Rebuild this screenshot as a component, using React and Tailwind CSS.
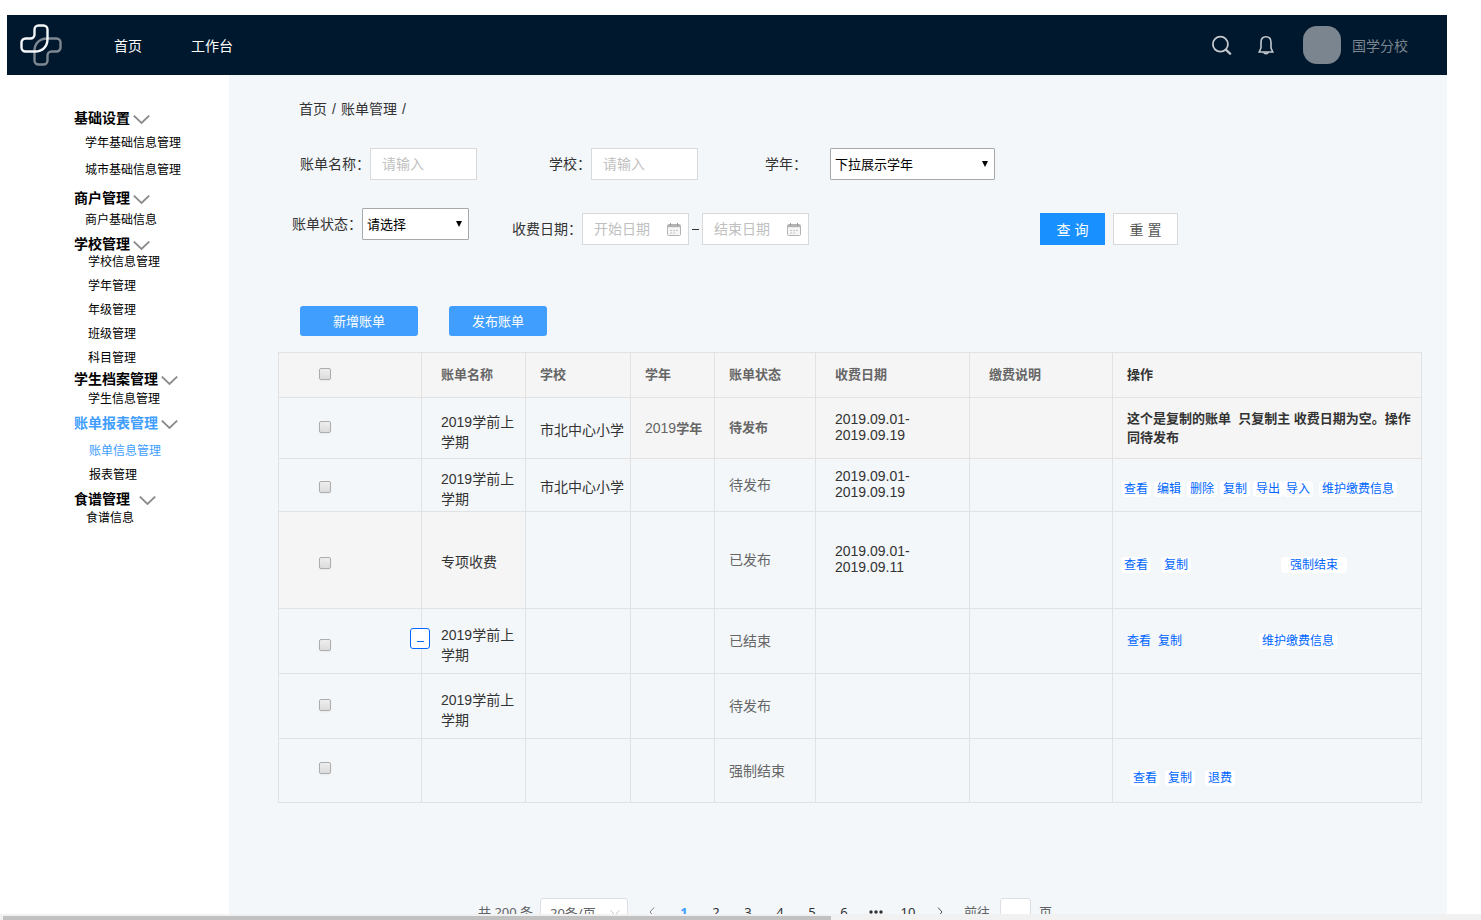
import React, { useState } from "react";
import clsx from "clsx";

const menu = [
  {
    title: "基础设置",
    className: "mt-0",
    listClass: "mt-[7px] pl-[11px] gap-[9px]",
    items: ["学年基础信息管理", "城市基础信息管理"],
  },
  {
    title: "商户管理",
    className: "mt-[10px]",
    listClass: "mt-[4px] pl-[11px]",
    items: ["商户基础信息"],
  },
  {
    title: "学校管理",
    className: "mt-[6px]",
    listClass: "pl-[14px] gap-[6px]",
    items: ["学校信息管理", "学年管理", "年级管理", "班级管理", "科目管理"],
  },
  {
    title: "学生档案管理",
    className: "mt-[3px]",
    listClass: "mt-[2px] pl-[14px]",
    items: ["学生信息管理"],
  },
  {
    title: "账单报表管理",
    className: "mt-[6px]",
    listClass: "mt-[10px] pl-[15px] gap-[6px]",
    items: ["账单信息管理", "报表管理"],
    active: "账单信息管理",
  },
  {
    title: "食谱管理",
    className: "mt-[6px]",
    listClass: "mt-[1px] pl-[12px]",
    items: ["食谱信息"],
  },
];

const columns = [
  { label: "账单名称", pad: "pl-[19px]" },
  { label: "学校", pad: "pl-[14px]" },
  { label: "学年", pad: "pl-[14px]" },
  { label: "账单状态", pad: "pl-[14px]" },
  { label: "收费日期", pad: "pl-[19px]" },
  { label: "缴费说明", pad: "pl-[19px]" },
];

const bills = [
  {
    height: "h-[61px]",
    boxPad: "pb-[2px]",
    name: "2019学前上学期",
    namePad: "pt-2",
    school: "市北中心小学",
    year: "2019学年",
    status: "待发布",
    date: ["2019.09.01-", "2019.09.19"],
    note: "这个是复制的账单\u00a0 只复制主 收费日期为空。操作同待发布",
    highlight: true,
  },
  {
    height: "h-[53px]",
    boxPad: "pt-1",
    name: "2019学前上学期",
    namePad: "pt-2",
    school: "市北中心小学",
    status: "待发布",
    date: ["2019.09.01-", "2019.09.19"],
    linkPad: "pl-2 pt-2",
    links: [
      { text: "查看" },
      { text: "编辑", className: "ml-[3px]" },
      { text: "删除", className: "ml-[3px]" },
      { text: "复制", className: "ml-[3px]" },
      { text: "导出", className: "ml-[3px]" },
      { text: "导入" },
      { text: "维护缴费信息", className: "ml-[6px]" },
    ],
  },
  {
    height: "h-[97px]",
    boxPad: "pt-[6px]",
    name: "专项收费",
    namePad: "pt-1",
    status: "已发布",
    date: ["2019.09.01-", "2019.09.11"],
    grayName: true,
    linkPad: "pl-2 pt-[10px]",
    links: [
      { text: "查看" },
      { text: "复制", className: "ml-[10px]" },
      { text: "强制结束", className: "ml-[90px] px-[9px]" },
    ],
  },
  {
    height: "h-[65px]",
    boxPad: "pt-2",
    name: "2019学前上学期",
    namePad: "pt-2",
    status: "已结束",
    expandable: true,
    linkPad: "pl-[11px]",
    links: [
      { text: "查看", plain: true },
      { text: "复制", plain: true, className: "ml-[1px]" },
      { text: "维护缴费信息", className: "ml-[74px]" },
    ],
  },
  {
    height: "h-[65px]",
    boxPad: "pb-[2px]",
    name: "2019学前上学期",
    namePad: "pt-2",
    status: "待发布",
    links: [],
  },
  {
    height: "h-[64px]",
    boxPad: "pb-[6px]",
    status: "强制结束",
    linkPad: "pl-[17px] pt-[14px]",
    links: [
      { text: "查看" },
      { text: "复制", className: "ml-[5px]" },
      { text: "退费", className: "ml-[10px]" },
    ],
  },
];

const cell = "border border-[#e2e2e2] p-0 text-left";

function Chevron() {
  return (
    <svg
      className="mt-[2px] h-[9px] w-[17px]"
      viewBox="0 0 17 9"
      fill="none"
      stroke="#8a8a8a"
      strokeWidth="1.8"
    >
      <path d="M0.8 0.6L8.5 8L16.2 0.6" />
    </svg>
  );
}

function Logo() {
  const d =
    "M18.5 1.5H23.5a4 4 0 0 1 4 4V15C27.5 22.5 22.5 27.5 15 27.5H5.5a4 4 0 0 1-4-4V18.5a4 4 0 0 1 4-4H10.5a4 4 0 0 0 4-4V5.5a4 4 0 0 1 4-4Z";
  return (
    <svg className="h-[42px] w-[42px]" viewBox="0 0 42 42" fill="none" strokeWidth="2.4">
      <path d={d} stroke="#7d8791" transform="rotate(180 21 21)" />
      <path d={d} stroke="#f4f6f8" />
    </svg>
  );
}

function CalendarIcon() {
  return (
    <svg
      className="pointer-events-none absolute top-[10px] right-[8px] h-[13px] w-[14px]"
      viewBox="0 0 14 13"
      fill="none"
      stroke="#b3b3b3"
    >
      <rect x="0.5" y="1.5" width="13" height="11" rx="1" fill="#f6f6f6" />
      <path d="M1 3h12" strokeWidth="2.4" />
      <path d="M3.5 0v3M10.5 0v3" stroke="#9b9b9b" />
      <path d="M3 7.5h8M3 10h6" strokeDasharray="2 1" stroke="#c4c4c4" />
    </svg>
  );
}

function TextField({ id, label }) {
  return (
    <div className="flex items-center">
      <label htmlFor={id} className="text-sm leading-8 text-[#333]">
        {label}：
      </label>
      <input
        id={id}
        type="text"
        placeholder="请输入"
        className="h-8 w-[107px] border border-[#d9d9d9] bg-white px-[11px] text-sm placeholder:text-[#bfbfbf]"
      />
    </div>
  );
}

function SelectField({ id, label, option, className, gap }) {
  return (
    <div className={clsx("flex items-center", gap)}>
      <label htmlFor={id} className="text-sm leading-8 text-[#333]">
        {label}：
      </label>
      <div className="relative">
        <select
          id={id}
          className={clsx(
            "block h-8 appearance-none rounded-[1px] border border-[#a9a9a9] bg-white pt-[2px] pl-[4px] text-[13px] text-black",
            className
          )}
        >
          <option>{option}</option>
        </select>
        <svg
          className="pointer-events-none absolute top-[13px] right-[7px] h-[6px] w-[6px]"
          viewBox="0 0 6 6"
        >
          <path d="M0 0H6L3 6Z" fill="#000" />
        </svg>
      </div>
    </div>
  );
}

function DateField({ label }) {
  return (
    <div className="relative">
      <input
        type="text"
        aria-label={label}
        placeholder={label}
        className="block h-8 w-[107px] border border-[#d9d9d9] bg-white pl-[11px] text-sm placeholder:text-[#bfbfbf]"
      />
      <CalendarIcon />
    </div>
  );
}

function Checkbox({ label }) {
  return (
    <input
      type="checkbox"
      aria-label={label}
      className="ml-10 block h-3 w-3 appearance-none rounded-[2px] border border-[#adadad] bg-linear-to-b from-[#eeeeee] to-[#dcdcdc] shadow-xs checked:bg-[#409eff]"
    />
  );
}

function BillRow({ bill, index }) {
  const gray = bill.highlight && "bg-[#f5f5f5]";
  const grayName = bill.grayName && "bg-[#f5f5f5]";
  const statusText = bill.highlight
    ? "text-[13px] font-bold text-[#666]"
    : "text-sm text-[#666]";

  return (
    <tr className={bill.height}>
      <td className={clsx(cell, grayName, bill.boxPad)}>
        <Checkbox label={`选择第${index + 1}行`} />
      </td>
      <td
        className={clsx(
          cell,
          grayName,
          "relative pr-2 pl-[19px] text-sm leading-5 text-[#333]",
          bill.namePad
        )}
      >
        {bill.expandable && (
          <button
            type="button"
            aria-label="收起"
            className="absolute top-[19px] -left-3 flex h-[21px] w-5 items-center justify-center rounded-[3px] border border-[#0066ff] bg-white"
          >
            <span className="mt-[5px] h-px w-[7px] bg-[#0066ff]" />
          </button>
        )}
        {bill.name}
      </td>
      <td className={clsx(cell, "pt-1 pl-[14px] text-sm whitespace-nowrap text-[#333]")}>
        {bill.school}
      </td>
      <td className={clsx(cell, gray, "pl-[14px]", statusText)}>
        {bill.year && (
          <>
            <span className="text-sm font-normal">{bill.year.slice(0, 4)}</span>
            {bill.year.slice(4)}
          </>
        )}
      </td>
      <td className={clsx(cell, gray, "pl-[14px]", statusText)}>{bill.status}</td>
      <td className={clsx(cell, gray, "pb-[2px] pl-[19px] text-sm leading-4 text-[#333]")}>
        {bill.date?.map((line) => (
          <div key={line}>{line}</div>
        ))}
      </td>
      <td className={clsx(cell, gray)}></td>
      {bill.note ? (
        <td className={clsx(cell, gray, "pr-2 pl-[14px] text-[13px] leading-[19px] text-[#333]")}>
          <strong>{bill.note}</strong>
        </td>
      ) : (
        <td className={clsx(cell, bill.linkPad)}>
          <div className="flex items-center">
            {bill.links.map((link) => (
              <a
                key={link.text}
                href="#"
                className={clsx(
                  "rounded-[4px] text-xs leading-4 text-[#0066ff]",
                  !link.plain && "bg-white",
                  !link.className?.includes("px-") && "px-[3px]",
                  link.className
                )}
              >
                {link.text}
              </a>
            ))}
          </div>
        </td>
      )}
    </tr>
  );
}

function Pagination() {
  const [page, setPage] = useState(1);

  return (
    <nav className="mt-[95px] ml-[200px] flex h-7 items-center font-['Noto_Sans','Noto_Sans_CJK_SC',sans-serif] text-[13px] leading-7 whitespace-nowrap text-[#606266]">
      <span className="w-[62px]">共 200 条</span>
      <div className="relative">
        <select
          aria-label="每页条数"
          className="block h-7 w-[88px] appearance-none rounded-[3px] border border-[#dcdfe6] bg-white pl-[9px] text-[13px]"
        >
          <option>20条/页</option>
        </select>
        <svg
          className="pointer-events-none absolute top-[12px] right-[8px] h-[6px] w-[10px]"
          viewBox="0 0 10 6"
          fill="none"
          stroke="#c0c4cc"
        >
          <path d="M0.5 0.5L5 5L9.5 0.5" />
        </svg>
      </div>
      <div className="ml-2 flex text-[#303133]">
        <button type="button" aria-label="上一页" className="flex w-8 items-center justify-center">
          <svg className="h-[10px] w-[6px]" viewBox="0 0 6 10" fill="none" stroke="#808389">
            <path d="M5 0.5L1 5L5 9.5" />
          </svg>
        </button>
        {[1, 2, 3, 4, 5, 6].map((n) => (
          <button
            key={n}
            type="button"
            onClick={() => setPage(n)}
            className={clsx("w-8 text-center", n === page && "font-bold text-[#409eff]")}
          >
            {n}
          </button>
        ))}
        <button type="button" aria-label="更多" className="flex w-8 items-center justify-center">
          <svg className="h-[4px] w-[14px]" viewBox="0 0 14 4" fill="#303133">
            <circle cx="2" cy="2" r="1.7" />
            <circle cx="7" cy="2" r="1.7" />
            <circle cx="12" cy="2" r="1.7" />
          </svg>
        </button>
        <button type="button" className="w-8 text-center">
          10
        </button>
        <button type="button" aria-label="下一页" className="flex w-8 items-center justify-center">
          <svg className="h-[10px] w-[6px]" viewBox="0 0 6 10" fill="none" stroke="#505359">
            <path d="M1 0.5L5 5L1 9.5" />
          </svg>
        </button>
      </div>
      <label htmlFor="jump" className="ml-2">
        前往
      </label>
      <input
        id="jump"
        type="text"
        className="mr-[8px] ml-[10px] h-7 w-[31px] rounded-[3px] border border-[#dcdfe6] bg-white text-center"
      />
      <span>页</span>
    </nav>
  );
}

export default function App() {
  return (
    <div className="flex h-screen flex-col bg-white font-['Liberation_Sans','Noto_Sans_CJK_SC',sans-serif]">
      <div className="flex min-h-0 flex-1 flex-col overflow-hidden pt-[15px] pr-[34px] pl-[7px]">
        <header className="flex h-[60px] shrink-0 items-center bg-[#00182d] pr-[39px] pl-[13px] text-sm">
          <Logo />
          <nav className="ml-[52px] flex gap-[49px] pt-[2px] text-white">
            <a href="#">首页</a>
            <a href="#">工作台</a>
          </nav>
          <div className="ml-auto flex items-center">
            <button type="button" aria-label="搜索">
              <svg className="h-5 w-5" viewBox="0 0 20 20" fill="none" stroke="#c3c9ce" strokeWidth="1.8">
                <circle cx="8.4" cy="9.2" r="7.5" />
                <path d="M13.6 14.4L18.8 19.4" strokeWidth="2.2" />
              </svg>
            </button>
            <button type="button" aria-label="通知" className="ml-[26px]">
              <svg className="h-5 w-4" viewBox="0 0 16 20" fill="none" stroke="#c3c9ce" strokeWidth="1.6">
                <path d="M3 13V7.4C3 3.8 5 1.8 8 1.8S13 3.8 13 7.4V13L14.8 17H1.2L3 13" />
                <path d="M5.6 17.2a2.5 2 0 0 0 4.8 0" />
              </svg>
            </button>
            <div className="ml-[29px] h-[38px] w-[38px] rounded-[14px] bg-[#7b858f]" />
            <span className="ml-[11px] pt-[2px] text-[#7b858f]">国学分校</span>
          </div>
        </header>

        <div className="flex min-h-0 flex-1">
          <aside className="w-[222px] shrink-0 pt-[34px] pl-[67px]">
            {menu.map((group) => (
              <div key={group.title} className={group.className}>
                <button
                  type="button"
                  className={clsx(
                    "flex h-[18px] items-center text-sm leading-[18px] font-bold",
                    group.title === "食谱管理" ? "gap-[9px]" : "gap-[3px]",
                    group.active ? "text-[#409eff]" : "text-black"
                  )}
                >
                  {group.title}
                  <Chevron />
                </button>
                <ul className={clsx("flex flex-col text-xs leading-[18px]", group.listClass)}>
                  {group.items.map((item) => (
                    <li key={item}>
                      <a
                        href="#"
                        className={clsx("block", item === group.active ? "text-[#409eff]" : "text-black")}
                      >
                        {item}
                      </a>
                    </li>
                  ))}
                </ul>
              </div>
            ))}
          </aside>

          <main className="min-w-0 flex-1 bg-[#f3f7fa] pr-[25px] pl-[49px]">
            <div className="flex gap-[5px] pt-6 pl-[21px] text-sm leading-5 text-[#333]">
              <a href="#">首页</a>
              <span>/</span>
              <a href="#">账单管理</a>
              <span>/</span>
            </div>

            <form className="mt-[29px]" onSubmit={(e) => e.preventDefault()}>
              <div className="flex pl-[22px]">
                <TextField id="bill-name" label="账单名称" />
                <div className="ml-[72px]">
                  <TextField id="school" label="学校" />
                </div>
                <div className="ml-[67px]">
                  <SelectField
                    id="year"
                    label="学年"
                    option="下拉展示学年"
                    className="w-[165px]"
                    gap="gap-[23px]"
                  />
                </div>
              </div>
              <div className="mt-7 flex items-start pl-[14px]">
                <SelectField id="status" label="账单状态" option="请选择" className="w-[107px]" />
                <div className="mt-[5px] ml-[43px] flex items-center text-sm text-[#333]">
                  <span>收费日期：</span>
                  <DateField label="开始日期" />
                  <span className="mx-[3px] h-px w-[7px] bg-[#333]" />
                  <DateField label="结束日期" />
                </div>
                <div className="mt-[5px] ml-[231px] flex gap-2 text-sm">
                  <button type="submit" className="h-8 w-[65px] bg-[#1890ff] pt-[2px] text-white">
                    查 询
                  </button>
                  <button
                    type="reset"
                    className="h-8 w-[65px] border border-[#d9d9d9] bg-white pt-[2px] text-[#555]"
                  >
                    重 置
                  </button>
                </div>
              </div>
            </form>

            <div className="mt-[61px] flex gap-[31px] pl-[22px] text-[13px] text-white">
              <button type="button" className="h-[30px] w-[118px] rounded-[3px] bg-[#409eff] pt-[2px]">
                新增账单
              </button>
              <button type="button" className="h-[30px] w-[98px] rounded-[3px] bg-[#409eff] pt-[2px]">
                发布账单
              </button>
            </div>

            <table className="mt-4 w-full table-fixed border-collapse">
              <colgroup>
                <col className="w-[143px]" />
                <col className="w-[104px]" />
                <col className="w-[105px]" />
                <col className="w-[84px]" />
                <col className="w-[101px]" />
                <col className="w-[154px]" />
                <col className="w-[143px]" />
                <col />
              </colgroup>
              <thead>
                <tr className="h-[45px] bg-[#f5f5f5] text-[13px] text-[#666]">
                  <th className={clsx(cell, "pb-[2px]")}>
                    <Checkbox label="全选" />
                  </th>
                  {columns.map((col) => (
                    <th key={col.label} className={clsx(cell, col.pad)}>
                      {col.label}
                    </th>
                  ))}
                  <th className={clsx(cell, "pl-[14px] text-[#333]")}>操作</th>
                </tr>
              </thead>
              <tbody>
                {bills.map((bill, i) => (
                  <BillRow key={i} bill={bill} index={i} />
                ))}
              </tbody>
            </table>

            <Pagination />
          </main>
        </div>
      </div>

      {/* horizontal scroll track */}
      <div className="h-[6px] shrink-0 bg-[#f1f1f1] pt-[2px] pl-[3px]">
        <div className="h-1 w-[56%] bg-[#c1c1c1]" />
      </div>
    </div>
  );
}
